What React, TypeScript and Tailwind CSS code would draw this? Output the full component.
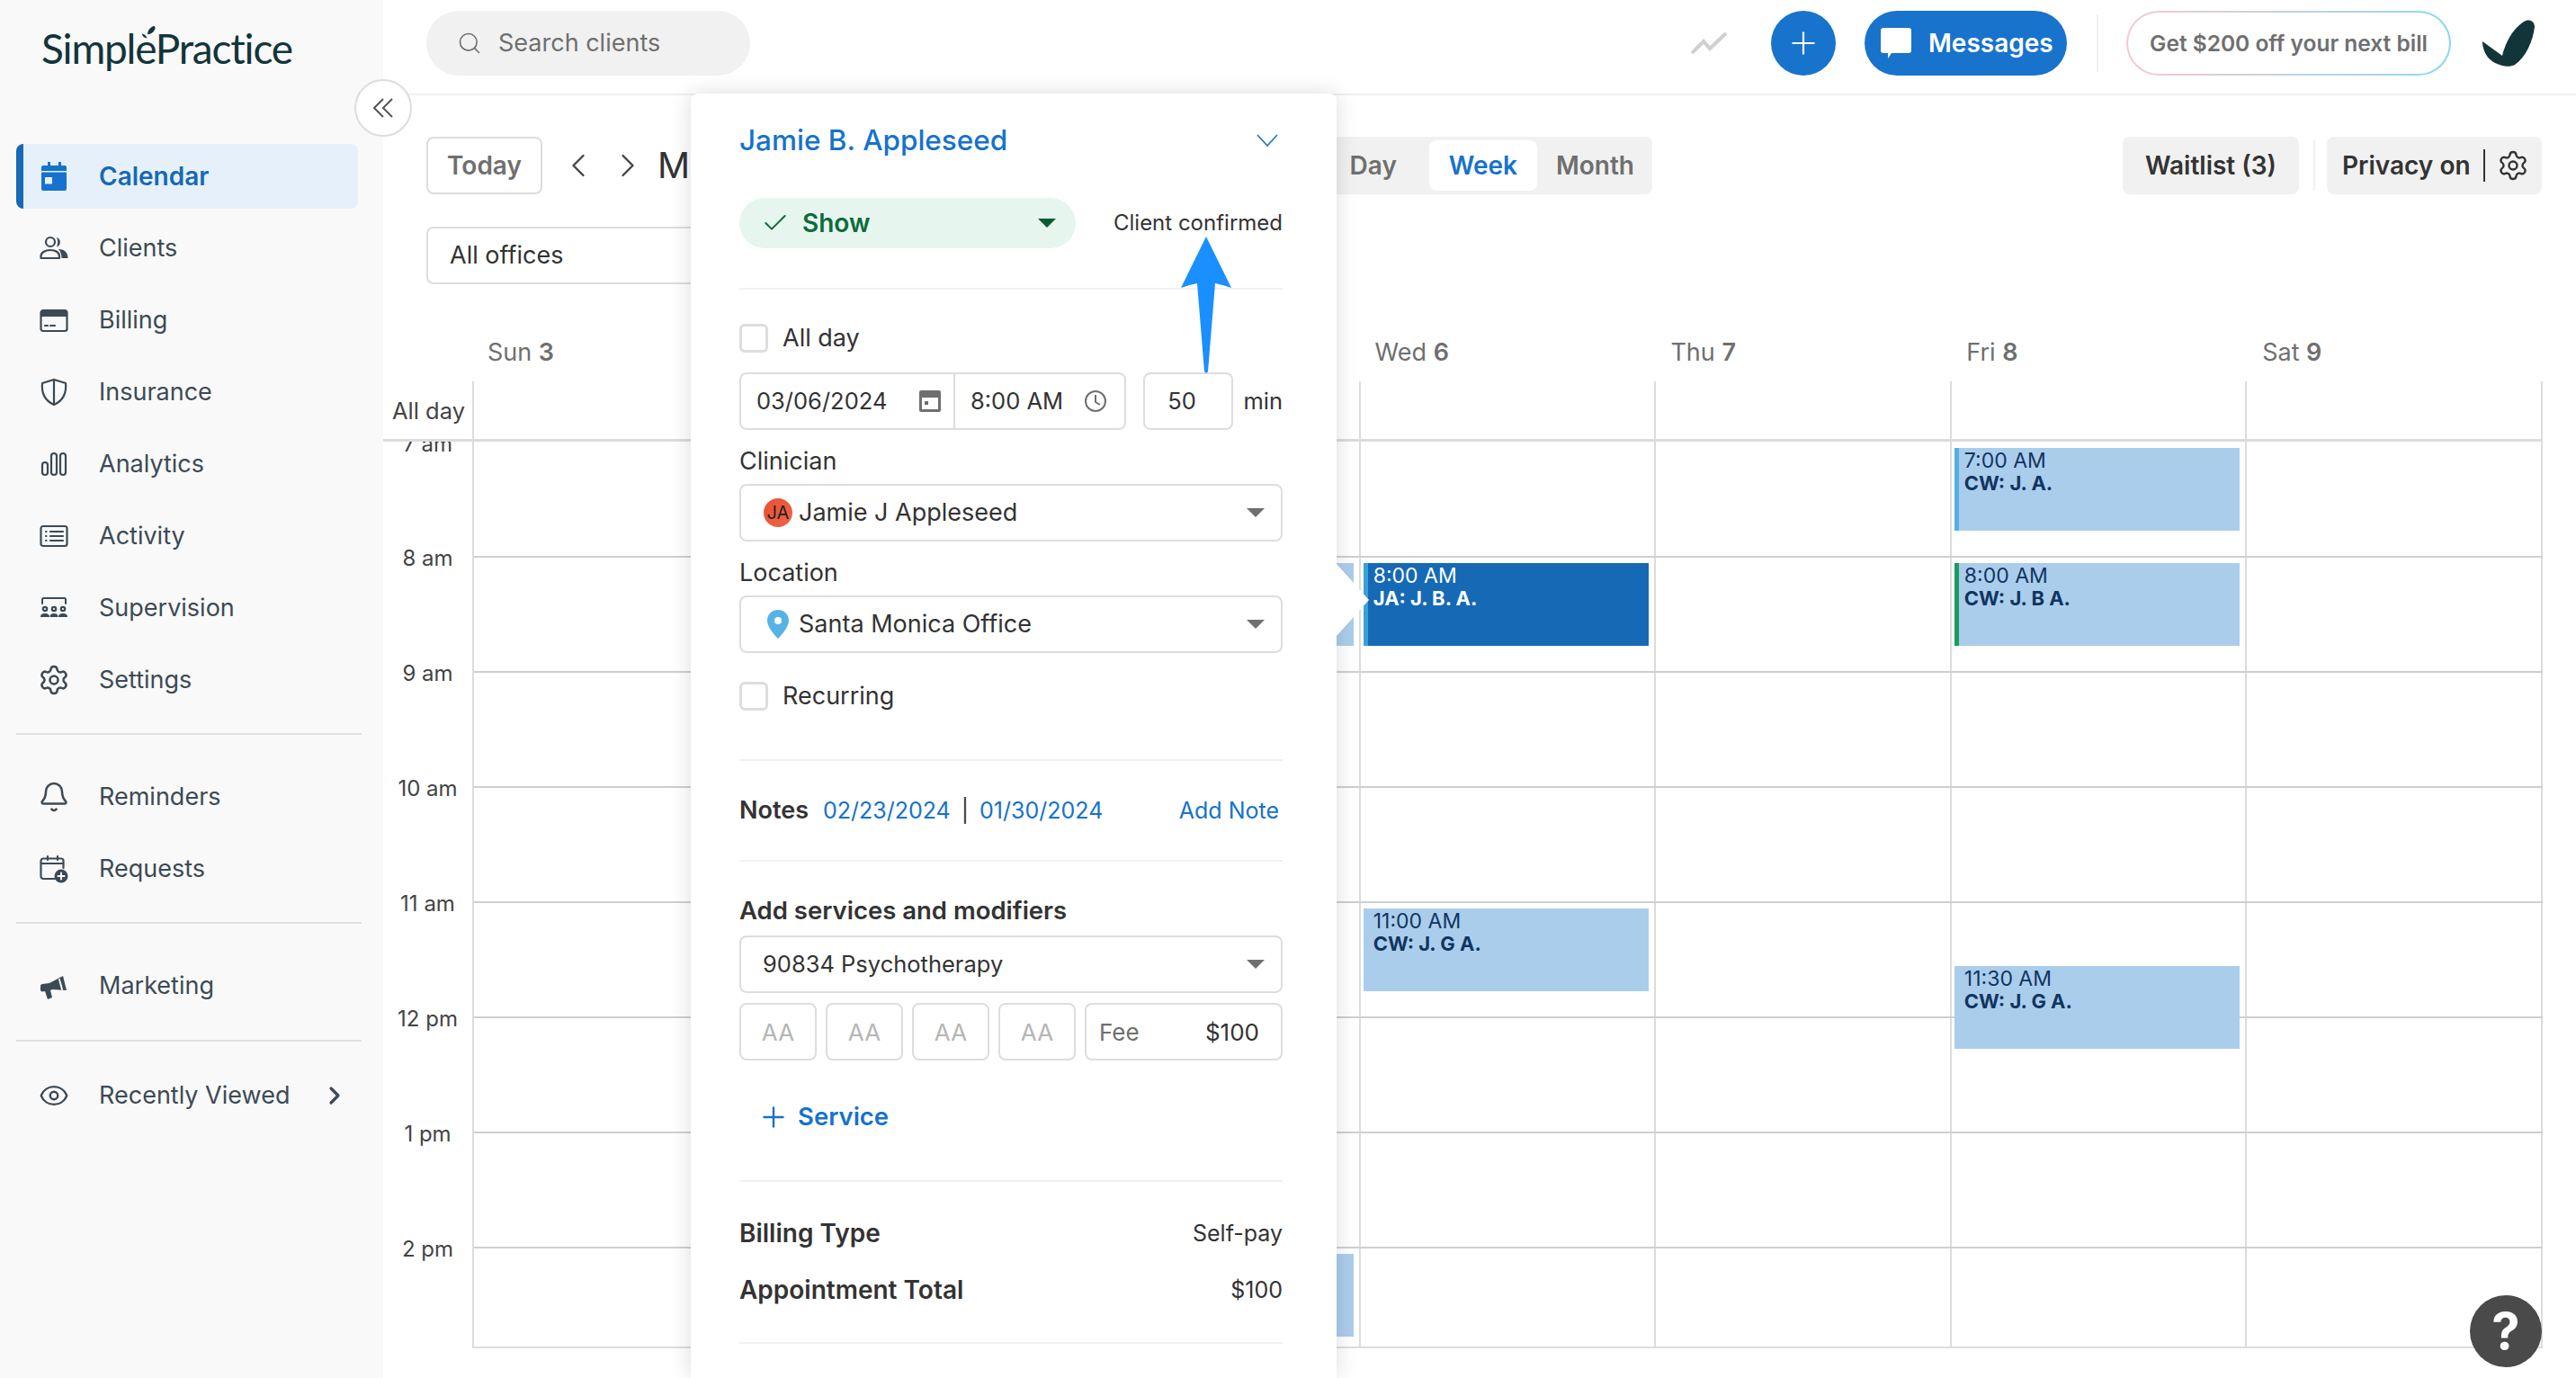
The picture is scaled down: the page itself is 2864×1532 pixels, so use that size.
import { Bell, ChevronLeft, ChevronRight, Eye, Plus, Search, Settings, Check } from "lucide-react"

const HOURS = ["7 am", "8 am", "9 am", "10 am", "11 am", "12 pm", "1 pm", "2 pm"]
const DAYS = [
  ["Sun", "3"],
  ["Mon", "4"],
  ["Tue", "5"],
  ["Wed", "6"],
  ["Thu", "7"],
  ["Fri", "8"],
  ["Sat", "9"],
]

type CalEvent = {
  day: number
  hour: number
  top: string
  time: string
  label: string
  bar: string
  dark?: boolean
}

const EVENTS: CalEvent[] = [
  { day: 5, hour: 0, top: "top-[7px]", time: "7:00 AM", label: "CW: J. A.", bar: "border-[#54b0e2]" },
  { day: 5, hour: 1, top: "top-[6px]", time: "8:00 AM", label: "CW: J. B A.", bar: "border-[#1d9a5f]" },
  { day: 3, hour: 1, top: "top-[6px]", time: "8:00 AM", label: "JA: J. B. A.", bar: "border-[#3aa0d8]", dark: true },
  { day: 2, hour: 1, top: "top-[6px]", time: "8:00 AM", label: "CW: J. A.", bar: "border-[#54b0e2]" },
  { day: 3, hour: 4, top: "top-[6px]", time: "11:00 AM", label: "CW: J. G A.", bar: "border-[#abcdec]" },
  { day: 5, hour: 4, top: "top-[70px]", time: "11:30 AM", label: "CW: J. G A.", bar: "border-[#abcdec]" },
  { day: 2, hour: 7, top: "top-[6px]", time: "2:00 PM", label: "CW: J. A.", bar: "border-[#abcdec]" },
]

function Svg({ children, className = "text-[#3c4a55]" }: { children: React.ReactNode; className?: string }) {
  return (
    <svg viewBox="0 0 32 32" className={`size-8 shrink-0 ${className}`} fill="none" stroke="currentColor" strokeWidth="2.2" strokeLinecap="round" strokeLinejoin="round">
      {children}
    </svg>
  )
}

const navIcons: Record<string, React.ReactNode> = {
  Calendar: (
    <Svg className="text-[#1672cc]">
      <path
        fill="currentColor"
        stroke="none"
        fillRule="evenodd"
        d="M9 0h3v4h9V0h3v4h4a2 2 0 0 1 2 2v4H2V6a2 2 0 0 1 2-2h5zM2 11.500h28V30a2 2 0 0 1-2 2H4a2 2 0 0 1-2-2zM6 17v7.500h8V17z"
      />
    </Svg>
  ),
  Clients: (
    <Svg>
      <circle cx="12" cy="9" r="5" />
      <path d="M1.500 27v-2c0-4 4-7 10.500-7s10 3 10 7v2z" />
      <path fill="currentColor" stroke="none" d="M19 4a5.500 5.500 0 0 1 0 10.500c1.500-3 1.500-7.500 0-10.500zM21 17c6 0 10.500 3 10.500 10h-7c0-4-1-7-3.500-10z" />
    </Svg>
  ),
  Billing: (
    <Svg>
      <rect x="1.500" y="5" width="29" height="23" rx="2.500" />
      <path fill="currentColor" stroke="none" d="M2 6h28v6H2z" />
      <path d="M6 22h3M12 22h5" />
    </Svg>
  ),
  Insurance: (
    <Svg>
      <path d="M16 2 29 6c1 10-2 19-13 24C5 25 2 16 3 6z" />
      <path d="M16 2v28" />
    </Svg>
  ),
  Analytics: (
    <Svg>
      <rect x="3" y="14" width="6" height="14" rx="3" />
      <rect x="13" y="4" width="6" height="24" rx="3" />
      <rect x="23" y="4" width="6" height="24" rx="3" />
    </Svg>
  ),
  Activity: (
    <Svg>
      <rect x="1.500" y="5" width="29" height="22" rx="2.500" />
      <path d="M7 11h.500M7 16h.500M7 21h.500M12 11h14M12 16h14M12 21h14" />
    </Svg>
  ),
  Supervision: (
    <Svg>
      <path d="M3 11V6.500A1.500 1.500 0 0 1 4.500 5h23A1.500 1.500 0 0 1 29 6.500V11" strokeWidth="2" />
      <circle cx="6" cy="17" r="2.200" />
      <circle cx="16" cy="17" r="2.200" />
      <circle cx="26" cy="17" r="2.200" />
      <path fill="currentColor" stroke="none" d="M1 26c0-3 2-4 5-4s5 1 5 4zM11.500 26c0-3 1.500-4 4.500-4s4.500 1 4.500 4zM21 26c0-3 2-4 5-4s5 1 5 4z" />
    </Svg>
  ),
  Settings: <Settings className="-mx-[2px] size-9 shrink-0 text-[#3c4a55]" strokeWidth={1.7} />,
  Reminders: <Bell className="-mx-[2px] size-9 shrink-0 text-[#3c4a55]" strokeWidth={1.7} />,
  Requests: (
    <Svg>
      <path d="M17 27H4a2.500 2.500 0 0 1-2.500-2.500V7A2.500 2.500 0 0 1 4 4.500h20A2.500 2.500 0 0 1 26.500 7v8" />
      <path d="M2 10h24M9 2v4M20 2v4" />
      <circle cx="24" cy="24" r="7.500" fill="currentColor" stroke="none" />
      <path d="M24 20.500v7M20.500 24h7" stroke="#f9f9f9" strokeWidth="2" />
    </Svg>
  ),
  Marketing: (
    <Svg>
      <path fill="currentColor" stroke="none" d="M1 16c0-1 1-2 2-2l8-1 15-8 4 16-16-1-2 1 2 8-5 2-3-9-3 .500c-1 0-2-1-2-2z" />
      <path d="m22 9 3 11" stroke="#f9f9f9" strokeWidth="2" />
    </Svg>
  ),
  "Recently Viewed": <Eye className="-mx-[1px] size-[34px] shrink-0 text-[#3c4a55]" strokeWidth={1.7} />,
}

function NavItem({ name, active }: { name: string; active?: boolean }) {
  return (
    <a
      className={`ml-[18px] flex h-[72px] w-[380px] items-center rounded-lg border-l-8 pl-[18px] ${
        active ? "border-[#1669b5] bg-[#e6f0fa] text-[28px] font-semibold text-[#1669b5]" : "border-transparent text-[27px] text-[#3c4a55]"
      }`}
    >
      {navIcons[name]}
      <span className="ml-[34px]">{name}</span>
      {name === "Recently Viewed" && <ChevronRight className="ml-auto mr-[10px] size-8" strokeWidth={2.4} />}
    </a>
  )
}

function Sidebar() {
  return (
    <aside className="flex w-[426px] shrink-0 flex-col bg-[#f9f9f9]">
      <div className="relative ml-[46px] mt-[26px] h-[56px] w-[290px] font-['Lato',sans-serif] text-[46px] leading-[56px] tracking-[-1.200px] text-[#12353a]">
        SimplePractice
        <svg viewBox="0 0 24 22" className="absolute left-[111px] top-[2px] h-[16px] w-[17px]" fill="#12353a">
          <path d="M10 14c0-6 4-11 9-13 3 0 4 3 2 6-2 4-6 7-11 7zM9 20C5 20 2 17 1 13c4 0 7 3 8 7z" />
        </svg>
      </div>
      <nav className="mt-[78px] flex flex-col gap-2">
        {["Calendar", "Clients", "Billing", "Insurance", "Analytics", "Activity", "Supervision", "Settings"].map((n) => (
          <NavItem key={n} name={n} active={n === "Calendar"} />
        ))}
      </nav>
      <div className="ml-[18px] mt-[23px] h-[2px] w-[384px] bg-[#e0e0e0]" />
      <div className="mt-[33px] flex flex-col gap-2">
        <NavItem name="Reminders" />
        <NavItem name="Requests" />
      </div>
      <div className="ml-[18px] mt-[23px] h-[2px] w-[384px] bg-[#e0e0e0]" />
      <div className="mt-[33px]">
        <NavItem name="Marketing" />
      </div>
      <div className="ml-[18px] mt-[24px] h-[2px] w-[384px] bg-[#e0e0e0]" />
      <div className="mt-[24px]">
        <NavItem name="Recently Viewed" />
      </div>
    </aside>
  )
}

function TopBar() {
  return (
    <header className="flex h-[106px] shrink-0 items-start border-b-2 border-[#f0f0f0] pl-[48px] pr-[46px] pt-[12px]">
      <div className="flex h-[72px] w-[360px] items-center rounded-full bg-[#f1f1f1] pl-[34px] text-[27px] text-[#6f6f6f]">
        <Search className="size-7" strokeWidth={1.4} />
        <span className="ml-[18px]">Search clients</span>
      </div>
      <div className="ml-auto flex h-[72px] items-center">
        <svg viewBox="0 0 41 26" className="h-[26px] w-[41px]" fill="none" stroke="#cfcfcf" strokeWidth="4">
          <path d="m1 24 13-13 7 8L39 2" />
        </svg>
        <button className="ml-[48px] flex size-[72px] items-center justify-center rounded-full bg-[#1873cc] text-white">
          <Plus className="size-10" strokeWidth={1.3} />
        </button>
        <button className="ml-[32px] flex h-[72px] w-[225px] items-center rounded-full bg-[#1873cc] pl-[18px] text-[28px] font-semibold text-white">
          <svg viewBox="0 0 34 34" className="h-[34px] w-[34px]" fill="white">
            <path d="M3 0h28a3 3 0 0 1 3 3v22a3 3 0 0 1-3 3H12l-4 6v-6H3a3 3 0 0 1-3-3V3a3 3 0 0 1 3-3z" />
          </svg>
          <span className="ml-[19px]">Messages</span>
        </button>
        <div className="ml-[33px] h-[64px] w-[2px] bg-[#f1f1f1]" />
        <div className="ml-[31px] rounded-full bg-gradient-to-r from-[#f6c9cf] to-[#86d8ee] p-[2px]">
          <div className="flex h-[68px] w-[357px] items-center justify-center rounded-full bg-white text-[24.500px] font-semibold text-[#6f6f6f]">
            Get $200 off your next bill
          </div>
        </div>
        <svg viewBox="0 0 58 52" className="ml-[35px] h-[52px] w-[58px]" fill="#12353a">
          <path d="M46 2C50-1 58 0 58 8 56 24 48 42 36 50 30 53 22 52 14 48 6 44 1 36 0 26V24L22 40C26 24 34 10 46 2Z" />
        </svg>
      </div>
    </header>
  )
}

function Toolbar() {
  return (
    <>
      <div className="mt-[46px] flex h-[64px] shrink-0 pl-[48px] pr-[38px]">
        <div className="flex w-[966px] items-center">
          <button className="h-[64px] w-[129px] rounded-lg border-2 border-[#dddddd] text-[28px] font-semibold text-[#6f6f6f]">Today</button>
          <ChevronLeft className="ml-[18px] size-[44px] text-[#444444]" strokeWidth={1.3} />
          <ChevronRight className="ml-[11px] size-[44px] text-[#444444]" strokeWidth={1.3} />
          <span className="ml-[11px] text-[40px] text-[#333333]">March 2024</span>
        </div>
        <div className="flex w-[397px] items-center justify-end rounded-r-lg bg-[#f1f1f1] pr-[20px] text-[28px] font-semibold text-[#6f6f6f]">
          <span>Day</span>
          <span className="ml-[36px] flex h-[56px] w-[120px] items-center justify-center rounded-lg bg-white text-[#1672cc]">Week</span>
          <span className="ml-[21px]">Month</span>
        </div>
        <div className="ml-auto flex items-center text-[28px] font-semibold text-[#333333]">
          <button className="h-[64px] w-[196px] rounded-lg bg-[#f1f1f1]">Waitlist (3)</button>
          <div className="ml-[16px] h-[56px] w-[2px] bg-[#f1f1f1]" />
          <div className="ml-[13px] flex h-[64px] w-[239px] items-center rounded-lg bg-[#f1f1f1] pl-[17px]">
            <span>Privacy on</span>
            <div className="ml-[14px] h-[36px] w-[2px] bg-[#333333]" />
            <Settings className="ml-[13px] size-9" strokeWidth={1.6} />
          </div>
        </div>
      </div>
      <div className="ml-[48px] mt-[36px] flex h-[64px] w-[400px] shrink-0 items-center rounded-lg border-2 border-[#dddddd] pl-[24px] text-[27px] text-[#333333]">All offices</div>
      <div className="ml-[99px] mt-[61px] grid h-[30px] w-[2302px] shrink-0 grid-cols-7 items-center text-[27px] leading-[30px] text-[#6f6f6f]">
        {DAYS.map(([d, n]) => (
          <div key={d} className="pl-[17px]">
            {d} <span className="font-semibold">{n}</span>
          </div>
        ))}
      </div>
    </>
  )
}

function Event({ ev }: { ev: CalEvent }) {
  return (
    <div
      className={`absolute left-[3px] right-[6px] h-[92px] border-l-[5px] pl-[6px] pt-[2px] text-[22px] leading-[25px] ${ev.top} ${ev.bar} ${
        ev.dark ? "bg-[#1669b5] text-white" : "bg-[#abcdec] text-[#103560]"
      }`}
    >
      <div className="text-[23px]">{ev.time}</div>
      <div className="font-bold">{ev.label}</div>
    </div>
  )
}

function CalendarGrid() {
  return (
    <div className="mt-[17px] flex flex-col">
      <div className="flex h-[64px]">
        <div className="flex w-[99px] items-end pb-[16px] pl-[10px] text-[25.500px] leading-[30px] text-[#444444]">All day</div>
        <div className="grid w-[2302px] grid-cols-7 border-l-2 border-[#dcdcdc]">
          {DAYS.map(([d]) => (
            <div key={d} className="border-r-2 border-[#dcdcdc]" />
          ))}
        </div>
      </div>
      <div className="mr-[37px] h-[3px] bg-[#dcdcdc]" />
      <div className="flex h-[1008px]">
        <div className="w-[99px] overflow-hidden text-center text-[24px] leading-[30px] text-[#444444]">
          {HOURS.map((h, i) => (
            <div key={h} className={`${i === 0 ? "h-[127px]" : "h-[128px]"} -translate-y-[12px]`}>
              {h}
            </div>
          ))}
        </div>
        <div className="w-[2302px] border-l-2 border-[#dcdcdc]">
          {HOURS.map((h, hour) => (
            <div
              key={h}
              className={`grid grid-cols-7 ${hour === 0 ? "h-[127px]" : "border-t-2 border-[#cfcfcf]"} ${hour === 7 ? "h-[113px] border-b-2 border-b-[#dcdcdc]" : ""} ${hour > 0 && hour < 7 ? "h-[128px]" : ""}`}
            >
              {DAYS.map(([d], day) => (
                <div key={d} className="relative border-r-2 border-[#dcdcdc]">
                  {EVENTS.filter((e) => e.day === day && e.hour === hour).map((e) => (
                    <Event key={e.time + e.label} ev={e} />
                  ))}
                </div>
              ))}
            </div>
          ))}
        </div>
      </div>
    </div>
  )
}

function Caret({ className }: { className: string }) {
  return (
    <svg viewBox="0 0 20 10" className={`h-[10px] w-[20px] ${className}`} fill="currentColor">
      <path d="M0 0h20L10 10z" />
    </svg>
  )
}

function Checkbox({ label }: { label: string }) {
  return (
    <label className="flex h-[32px] items-center">
      <span className="size-[32px] rounded-md border-[3px] border-[#dddddd]" />
      <span className="ml-[16px]">{label}</span>
    </label>
  )
}

function Field({ children, className = "" }: { children: React.ReactNode; className?: string }) {
  return <div className={`flex h-[64px] items-center rounded-lg border-2 border-[#dddddd] ${className}`}>{children}</div>
}

function Rule({ className }: { className: string }) {
  return <div className={`h-[2px] bg-[#f1f1f1] ${className}`} />
}

function AppointmentPopover() {
  return (
    <section className="absolute bottom-0 left-[768px] top-[104px] z-10 w-[718px] rounded-t-lg bg-white pl-[54px] pr-[60px] pt-[32px] text-[27px] text-[#333333] shadow-[0_0_24px_rgba(0,0,0,0.14)]">
      <div className="flex h-[40px] items-center justify-between">
        <a className="text-[31.500px] font-medium text-[#1672cc]">Jamie B. Appleseed</a>
        <svg viewBox="0 0 24 14" className="mr-[5px] h-[14px] w-[24px]" fill="none" stroke="#1672cc" strokeWidth="1.600">
          <path d="m1 1 11 12L23 1" />
        </svg>
      </div>
      <div className="mt-[44px] flex h-[56px] items-center justify-between">
        <div className="flex h-[56px] w-[374px] items-center rounded-full bg-[#e6f6ef] pl-[24px] pr-[22px] text-[28px] font-semibold text-[#0e6b3a]">
          <Check className="size-8" strokeWidth={1.5} />
          <span className="ml-[14px]">Show</span>
          <Caret className="ml-auto text-[#0c5c33]" />
        </div>
        <span className="text-[24px]">Client confirmed</span>
      </div>
      <Rule className="mt-[44px]" />
      <div className="mt-[38px]">
        <Checkbox label="All day" />
      </div>
      <div className="mt-[22px] flex h-[64px] items-center text-[25.500px]">
        <Field className="w-[430px]">
          <div className="flex h-full w-[238px] items-center justify-between border-r-2 border-[#dddddd] pl-[17px] pr-[14px]">
            <span>03/06/2024</span>
            <svg viewBox="0 0 24 24" className="size-6 shrink-0" fill="#6f6f6f">
              <path fillRule="evenodd" d="M2 0h20a2 2 0 0 1 2 2v20a2 2 0 0 1-2 2H2a2 2 0 0 1-2-2V2a2 2 0 0 1 2-2zm1 8v13h18V8zm3 4h4v4H6z" />
            </svg>
          </div>
          <div className="flex flex-1 items-center justify-between pl-[17px] pr-[20px]">
            <span>8:00 AM</span>
            <svg viewBox="0 0 24 24" className="size-6 shrink-0" fill="none" stroke="#6f6f6f" strokeWidth="2">
              <circle cx="12" cy="12" r="11" />
              <path d="M12 5v8l5 3" />
            </svg>
          </div>
        </Field>
        <Field className="ml-[19px] w-[100px] justify-center pr-[14px]">50</Field>
        <span className="ml-auto">min</span>
      </div>
      <div className="mt-[20px] h-[30px] leading-[30px]">Clinician</div>
      <Field className="mt-[10px] pl-[25px] pr-[18px]">
        <span className="flex size-[32px] items-center justify-center rounded-full bg-gradient-to-br from-[#e8502f] to-[#f0654a] text-[20px] text-[#222222]">JA</span>
        <span className="ml-[7px]">Jamie J Appleseed</span>
        <Caret className="ml-auto text-[#6f6f6f]" />
      </Field>
      <div className="mt-[20px] h-[30px] leading-[30px]">Location</div>
      <Field className="mt-[10px] pl-[29px] pr-[18px]">
        <svg viewBox="0 0 24 32" className="h-[32px] w-[24px]" fill="#56b4e4">
          <path fillRule="evenodd" d="M12 0c7 0 12 5 12 12 0 6-6 14-12 20C6 26 0 18 0 12 0 5 5 0 12 0zm0 8a4 4 0 1 0 0 8 4 4 0 0 0 0-8z" />
        </svg>
        <span className="ml-[11px]">Santa Monica Office</span>
        <Caret className="ml-auto text-[#6f6f6f]" />
      </Field>
      <div className="mt-[32px]">
        <Checkbox label="Recurring" />
      </div>
      <Rule className="mt-[54px]" />
      <div className="mt-[39px] flex h-[32px] items-center text-[25px] leading-[32px]">
        <span className="text-[27px] font-semibold">Notes</span>
        <a className="ml-[16px] text-[#1672cc]">02/23/2024</a>
        <span className="ml-[12px]">|</span>
        <a className="ml-[12px] text-[#1672cc]">01/30/2024</a>
        <a className="ml-auto mr-[4px] text-[#1672cc]">Add Note</a>
      </div>
      <Rule className="mt-[39px]" />
      <div className="mt-[39px] h-[30px] text-[27.500px] font-semibold leading-[30px]">Add services and modifiers</div>
      <Field className="mt-[13px] pl-[24px] pr-[18px] text-[25.500px]">
        <span>90834 Psychotherapy</span>
        <Caret className="ml-auto text-[#6f6f6f]" />
      </Field>
      <div className="mt-[11px] flex h-[63px] gap-[10px] text-[26px] text-[#b5b5b5]">
        {["a", "b", "c", "d"].map((k) => (
          <Field key={k} className="h-[63px] w-[86px] justify-center">
            AA
          </Field>
        ))}
        <Field className="h-[63px] flex-1 justify-between pl-[14px] pr-[24px]">
          <span className="text-[#6f6f6f]">Fee</span>
          <span className="text-[#333333]">$100</span>
        </Field>
      </div>
      <div className="mt-[48px] flex h-[32px] items-center pl-[20px] text-[27.500px] font-semibold text-[#1672cc]">
        <Plus className="size-9" strokeWidth={1.6} />
        <span className="ml-[9px]">Service</span>
      </div>
      <Rule className="mt-[54px]" />
      <div className="mt-[42px] flex h-[30px] items-center justify-between text-[28px] leading-[30px]">
        <span className="font-semibold">Billing Type</span>
        <span className="text-[25px]">Self-pay</span>
      </div>
      <div className="mt-[33px] flex h-[30px] items-center justify-between text-[28px] leading-[30px]">
        <span className="font-semibold">Appointment Total</span>
        <span className="text-[25px]">$100</span>
      </div>
      <Rule className="mt-[43px]" />

      {/* pointer towards the selected event */}
      <svg viewBox="0 0 36 80" className="absolute left-[718px] top-[523px] h-[80px] w-[36px]" fill="white">
        <path d="M0 0 36 40 0 80z" />
      </svg>
      {/* annotation arrow */}
      <svg viewBox="0 0 56 152" className="absolute left-[545px] top-[159px] h-[152px] w-[56px]" fill="#1a8fff">
        <path d="M28 0 56 57Q48 54 38 52L30 150Q28 153 26 150L18 52Q8 54 0 57Z" />
      </svg>
    </section>
  )
}

export default function App() {
  return (
    <div className="relative flex h-[1532px] w-[2864px] overflow-hidden bg-white font-['Inter',sans-serif]">
      <Sidebar />
      <main className="flex min-w-0 flex-1 flex-col">
        <TopBar />
        <Toolbar />
        <CalendarGrid />
      </main>
      <button className="absolute left-[394px] top-[88px] z-10 flex size-[64px] items-center justify-center rounded-full border-2 border-[#dddddd] bg-white">
        <svg viewBox="0 0 24 22" className="h-[22px] w-[24px]" fill="none" stroke="#555555" strokeWidth="2">
          <path d="M12 1 2 11l10 10M22 1 12 11l10 10" />
        </svg>
      </button>
      <AppointmentPopover />
      <button className="absolute left-[2746px] top-[1440px] z-10 flex size-[80px] items-center justify-center rounded-full bg-[#4a4a4a] text-[56px] font-bold text-white">?</button>
    </div>
  )
}
